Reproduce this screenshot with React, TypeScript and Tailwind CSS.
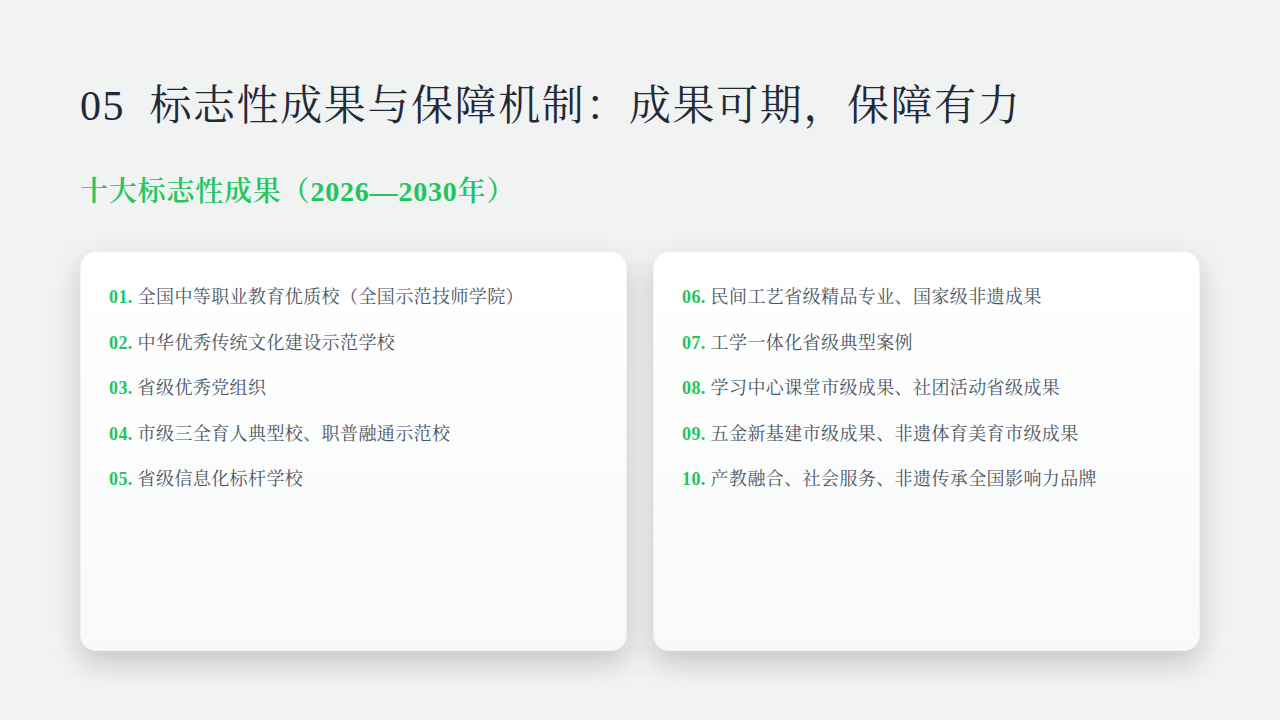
import React from "react";

const left = [
  ["01.", "全国中等职业教育优质校（全国示范技师学院）"],
  ["02.", "中华优秀传统文化建设示范学校"],
  ["03.", "省级优秀党组织"],
  ["04.", "市级三全育人典型校、职普融通示范校"],
  ["05.", "省级信息化标杆学校"],
];
const right = [
  ["06.", "民间工艺省级精品专业、国家级非遗成果"],
  ["07.", "工学一体化省级典型案例"],
  ["08.", "学习中心课堂市级成果、社团活动省级成果"],
  ["09.", "五金新基建市级成果、非遗体育美育市级成果"],
  ["10.", "产教融合、社会服务、非遗传承全国影响力品牌"],
];

const font = { fontFamily: '"Liberation Serif", "Noto Serif CJK SC", "Noto Sans CJK SC", serif' };

function Card({ items }: { items: string[][] }) {
  return (
    <div className="flex-1 h-[400px] rounded-2xl bg-gradient-to-b from-white to-[#f8f9f9] border border-[#eef2f1] shadow-[0_12px_28px_rgba(0,0,0,0.18)] pl-7 pt-[33px] flex flex-col gap-[21.5px]">
      {items.map(([n, t]) => (
        <div key={n} className="text-[18px] leading-[24px] text-[#4b5563] tracking-[0.4px]">
          <span className="text-[#22c55e] font-bold">{n}</span> {t}
        </div>
      ))}
    </div>
  );
}

export default function App() {
  return (
    <div
      style={font}
      className="w-[1280px] h-[720px] overflow-hidden bg-[#f1f3f2] px-[80px] pt-[80px] bg-[repeating-linear-gradient(0deg,transparent_0,transparent_23px,rgba(0,0,0,0.025)_24px)]"
    >
      <div className="w-full h-full">
        <h1 className="text-[42px] leading-[52px] text-[#1f2937] tracking-[1.6px]">05&nbsp;&nbsp;标志性成果与保障机制：成果可期，保障有力</h1>
        <h2 className="mt-[42px] text-[28px] leading-[36px] text-[#22c55e] tracking-[0.8px] font-semibold">十大标志性成果（2026—2030年）</h2>
        <div className="mt-[41px] flex gap-[26px] w-[1120px]">
          <Card items={left} />
          <Card items={right} />
        </div>
      </div>
    </div>
  );
}
